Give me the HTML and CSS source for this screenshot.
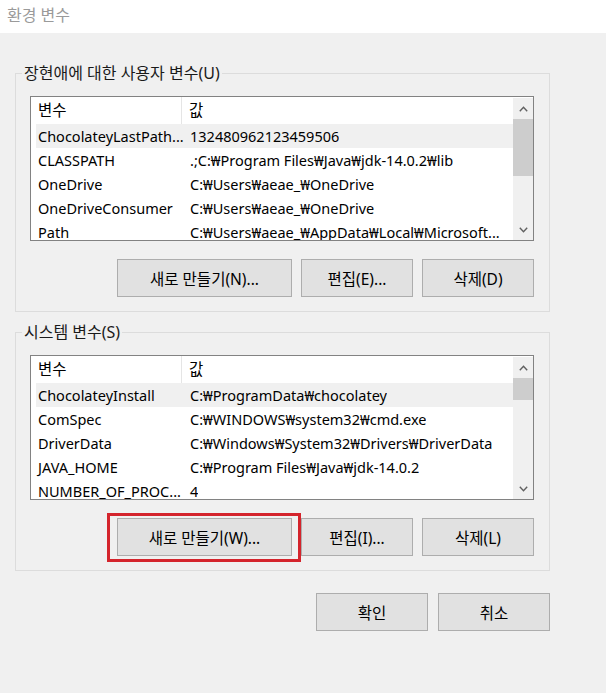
FILE: index.html
```html
<!DOCTYPE html>
<html lang="ko">
<head>
<meta charset="utf-8">
<title>환경 변수</title>
<link rel="stylesheet" href="styles.css">
</head>
<body>
<div class="titlebar">환경 변수</div>
<div class="content">
  <div class="group group-user">
    <span class="group-title">장현애에 대한 사용자 변수(U)</span>
    <div class="list">
      <div class="list-body">
        <div class="list-header">
          <div class="hcol hcol-name">변수</div>
          <div class="hcol hcol-value">값</div>
        </div>
        <div class="row selected"><span class="c1">ChocolateyLastPath...</span><span class="c2">132480962123459506</span></div>
        <div class="row"><span class="c1">CLASSPATH</span><span class="c2">.;C:₩Program Files₩Java₩jdk-14.0.2₩lib</span></div>
        <div class="row"><span class="c1">OneDrive</span><span class="c2">C:₩Users₩aeae_₩OneDrive</span></div>
        <div class="row"><span class="c1">OneDriveConsumer</span><span class="c2">C:₩Users₩aeae_₩OneDrive</span></div>
        <div class="row"><span class="c1">Path</span><span class="c2">C:₩Users₩aeae_₩AppData₩Local₩Microsoft...</span></div>
      </div>
      <div class="scrollbar">
        <div class="arrow"><svg width="9" height="6" viewBox="0 0 9 6"><polyline points="0.8,5.2 4.5,1.3 8.2,5.2" fill="none" stroke="#606060" stroke-width="1.4"/></svg></div>
        <div class="thumb thumb-user"></div>
        <div class="track"></div>
        <div class="arrow"><svg width="9" height="6" viewBox="0 0 9 6"><polyline points="0.8,0.8 4.5,4.7 8.2,0.8" fill="none" stroke="#606060" stroke-width="1.4"/></svg></div>
      </div>
    </div>
    <div class="btn-row">
      <div class="btn btn-wide">새로 만들기(N)...</div>
      <div class="btn">편집(E)...</div>
      <div class="btn">삭제(D)</div>
    </div>
  </div>

  <div class="group group-system">
    <span class="group-title">시스템 변수(S)</span>
    <div class="list">
      <div class="list-body">
        <div class="list-header">
          <div class="hcol hcol-name">변수</div>
          <div class="hcol hcol-value">값</div>
        </div>
        <div class="row selected"><span class="c1">ChocolateyInstall</span><span class="c2">C:₩ProgramData₩chocolatey</span></div>
        <div class="row"><span class="c1">ComSpec</span><span class="c2">C:₩WINDOWS₩system32₩cmd.exe</span></div>
        <div class="row"><span class="c1">DriverData</span><span class="c2">C:₩Windows₩System32₩Drivers₩DriverData</span></div>
        <div class="row"><span class="c1">JAVA_HOME</span><span class="c2">C:₩Program Files₩Java₩jdk-14.0.2</span></div>
        <div class="row"><span class="c1">NUMBER_OF_PROC...</span><span class="c2">4</span></div>
      </div>
      <div class="scrollbar">
        <div class="arrow"><svg width="9" height="6" viewBox="0 0 9 6"><polyline points="0.8,5.2 4.5,1.3 8.2,5.2" fill="none" stroke="#606060" stroke-width="1.4"/></svg></div>
        <div class="thumb thumb-system"></div>
        <div class="track"></div>
        <div class="arrow"><svg width="9" height="6" viewBox="0 0 9 6"><polyline points="0.8,0.8 4.5,4.7 8.2,0.8" fill="none" stroke="#606060" stroke-width="1.4"/></svg></div>
      </div>
    </div>
    <div class="btn-row">
      <div class="btn btn-wide highlighted">새로 만들기(W)...<span class="red-box"></span></div>
      <div class="btn">편집(I)...</div>
      <div class="btn">삭제(L)</div>
    </div>
  </div>

  <div class="dialog-buttons">
    <div class="btn">확인</div>
    <div class="btn">취소</div>
  </div>
</div>
</body>
</html>
```

FILE: styles.css
```css
* { box-sizing: border-box; }

html, body {
  margin: 0;
  padding: 0;
}

body {
  background: #f0f0f0;
  font-family: "Noto Sans", "Noto Sans CJK KR", sans-serif;
  font-size: 15px;
  color: #000;
  width: 606px;
  height: 693px;
  overflow: hidden;
}

.titlebar {
  height: 33px;
  background: #ffffff;
  color: #9a9a9a;
  font-size: 16px;
  line-height: 30px;
  padding-left: 7px;
}

.content {
  padding: 40px 0 0 15px;
  width: 550px;
}

.group {
  position: relative;
  border: 1px solid #dcdcdc;
  padding: 22px 15px 14px 14px;
}

.group-system {
  margin-top: 20px;
}

.group-title {
  position: absolute;
  top: -11px;
  left: 6px;
  padding: 0 2px;
  background: #f0f0f0;
  line-height: 20px;
  font-size: 16px;
  color: #1a1a1a;
}

.list {
  display: flex;
  height: 145px;
  border: 1px solid #828282;
  background: #ffffff;
  overflow: hidden;
}

.list-body {
  flex: 1;
  min-width: 0;
  overflow: hidden;
}

.list-header {
  display: flex;
  height: 27px;
  line-height: 27px;
  font-size: 15.5px;
}

.hcol-name {
  width: 151px;
  padding-left: 7px;
  border-right: 1px solid #e5e5e5;
}

.hcol-value {
  padding-left: 7px;
}

.row {
  display: flex;
  height: 24px;
  line-height: 25px;
  margin-left: 5px;
  white-space: nowrap;
  font-size: 14.5px;
}

.row.selected {
  background: #f0f0f0;
}

.c1 {
  width: 152px;
  flex: none;
  padding-left: 2px;
  overflow: hidden;
}

.c2 {
  padding-left: 2px;
  overflow: hidden;
}

.scrollbar {
  width: 20px;
  flex: none;
  background: #f0f0f0;
  display: flex;
  flex-direction: column;
  margin-top: 1px;
}

.arrow {
  height: 21px;
  display: flex;
  align-items: center;
  justify-content: center;
  flex: none;
}

.thumb {
  background: #cdcdcd;
  flex: none;
}

.thumb-user { height: 57px; }
.thumb-system { height: 22px; }

.track { flex: 1; }

.btn-row {
  display: flex;
  justify-content: flex-end;
  gap: 9px;
  margin-top: 18px;
}

.btn {
  position: relative;
  width: 112px;
  height: 38px;
  background: #e1e1e1;
  border: 1px solid #adadad;
  display: flex;
  align-items: center;
  justify-content: center;
  white-space: nowrap;
  font-size: 15.5px;
}

.btn-wide {
  width: 175px;
}

.red-box {
  position: absolute;
  top: -6px;
  left: -11px;
  right: -10px;
  bottom: -7px;
  border: 3px solid #d4242c;
}

.dialog-buttons {
  display: flex;
  justify-content: flex-end;
  gap: 10px;
  margin-top: 22px;
}
```
